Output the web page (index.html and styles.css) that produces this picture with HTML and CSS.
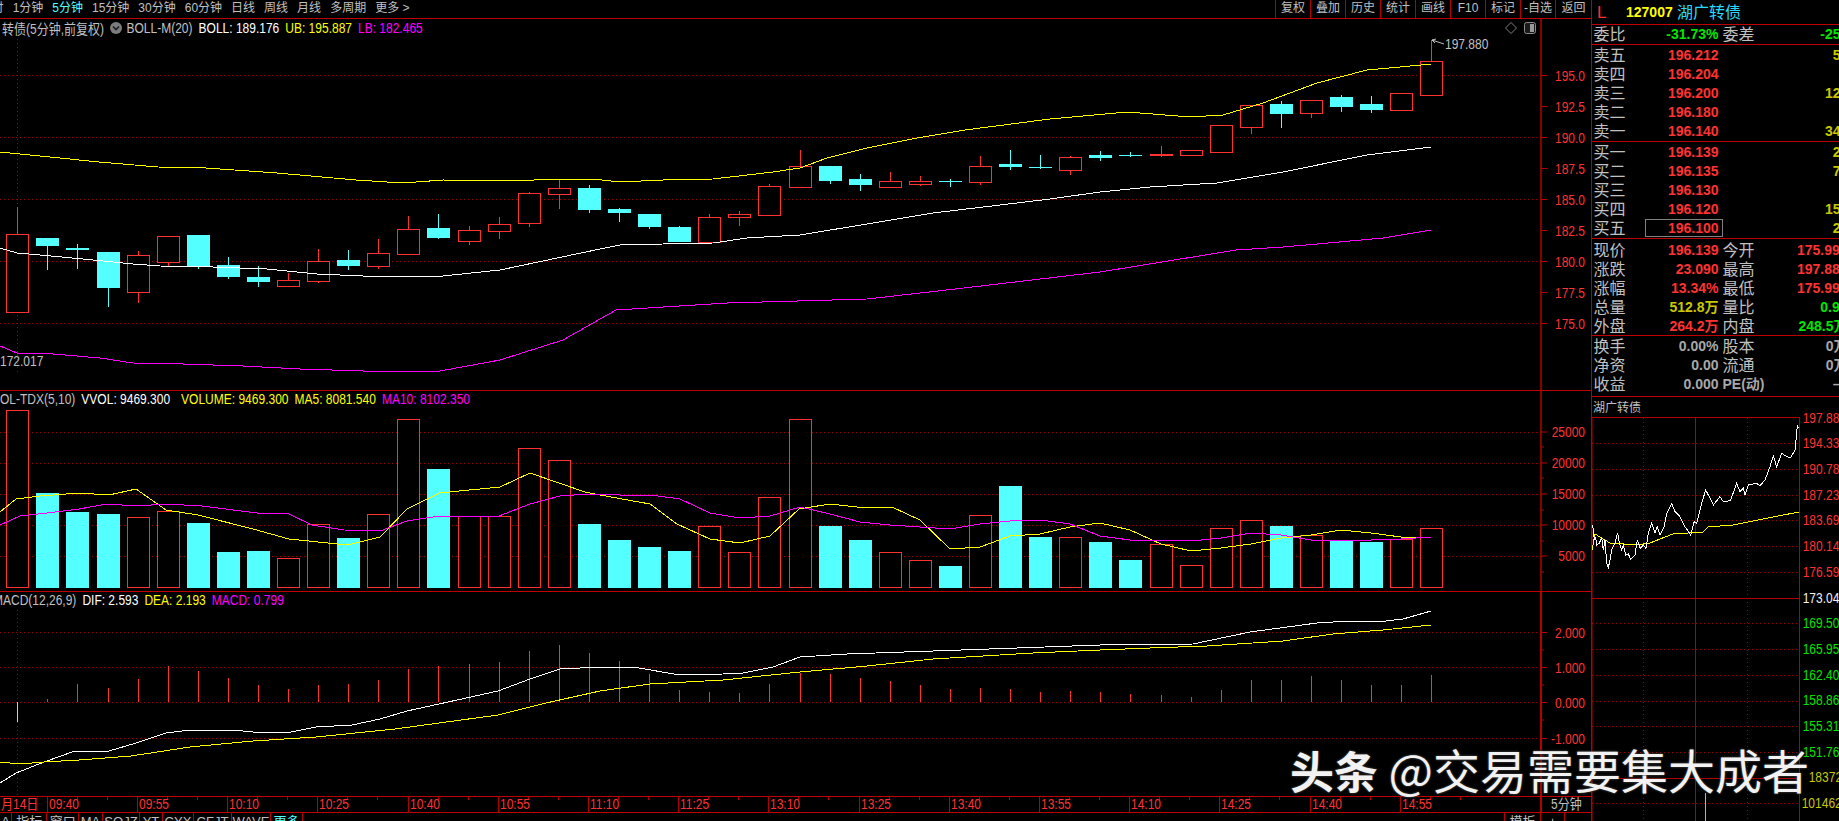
FILE: index.html
```html
<!DOCTYPE html>
<html lang="zh-CN">
<head>
<meta charset="utf-8">
<title>湖广转债 5分钟</title>
<link rel="stylesheet" href="styles.css">
</head>
<body>
<div class="app">
  <div class="left">
    <header class="topbar">
      <nav class="periods">
        <span class="cut">分时</span><span>1分钟</span><span class="on">5分钟</span><span>15分钟</span><span>30分钟</span><span>60分钟</span><span>日线</span><span>周线</span><span>月线</span><span>多周期</span><span>更多 &gt;</span>
      </nav>
      <nav class="tools">
        <span>复权</span><span>叠加</span><span>历史</span><span>统计</span><span>画线</span><span>F10</span><span>标记</span><span>-自选</span><span>返回</span>
      </nav>
    </header>

    <section class="pane pane-main">
      <svg id="main" class="chart" viewBox="0 19 1591 371"></svg>
      <div class="legend">
        <span class="gray">转债(5分钟,前复权)</span>
        <svg class="drop" viewBox="0 0 12 12"><circle cx="6" cy="6" r="6" fill="#7c7c7c"/><path d="M3 4.5 6 7.5 9 4.5" fill="none" stroke="#1c1c1c" stroke-width="1.6"/></svg>
        <span class="gray">BOLL-M(20)</span>
        <span class="white">BOLL: 189.176</span>
        <span class="yellow">UB: 195.887</span>
        <span class="pink">LB: 182.465</span>
      </div>
      <div class="pane-icons">
        <svg viewBox="0 0 12 12" class="ico"><path d="M6 .5 11.5 6 6 11.5 .5 6Z" fill="none" stroke="#808080"/></svg>
        <svg viewBox="0 0 12 12" class="ico"><rect x=".5" y=".5" width="11" height="11" rx="2" fill="#1a1a1a" stroke="#8c8c8c"/><rect x="6" y="2" width="4" height="8" fill="#9a9a9a"/></svg>
      </div>
    </section>

    <section class="pane pane-vol">
      <svg id="vol" class="chart" viewBox="0 391 1591 200"></svg>
      <div class="legend">
        <span class="gray flush">OL-TDX(5,10)</span>
        <span class="white">VVOL: 9469.300</span>
        <span class="yellow wide">VOLUME: 9469.300</span>
        <span class="yellow">MA5: 8081.540</span>
        <span class="pink">MA10: 8102.350</span>
      </div>
    </section>

    <section class="pane pane-macd">
      <svg id="macd" class="chart" viewBox="0 592 1591 204"></svg>
      <div class="legend">
        <span class="gray clip">MACD(12,26,9)</span>
        <span class="white">DIF: 2.593</span>
        <span class="yellow">DEA: 2.193</span>
        <span class="pink">MACD: 0.799</span>
      </div>
    </section>

    <svg id="time" class="timeaxis" viewBox="0 797 1591 15"></svg>

    <footer class="tabs">
      <span>A</span><span>指标B</span><span>窗口</span><span>MA</span><span>SQJZ</span><span>YT</span><span>CYX</span><span>CFJT</span><span>WAVE</span><span class="on">更多</span><i></i><span>模板</span><span>+</span><b>−</b>
    </footer>
  </div>

  <aside class="right">
    <div class="head"><span class="h-l">L</span><span class="h-code">127007</span><span class="h-name">湖广转债</span></div>

    <div class="block b-ratio">
      <div class="row"><span>委比</span><b class="g">-31.73%</b><i></i><span>委差</span><b class="g q">-25</b></div>
    </div>

    <div class="block b-book">
      <div class="row"><span>卖五</span><b class="r">196.212</b><i></i><span></span><b class="y q">5</b></div>
      <div class="row"><span>卖四</span><b class="r">196.204</b><i></i><span></span><b class="y q"></b></div>
      <div class="row"><span>卖三</span><b class="r">196.200</b><i></i><span></span><b class="y q">12</b></div>
      <div class="row"><span>卖二</span><b class="r">196.180</b><i></i><span></span><b class="y q"></b></div>
      <div class="row"><span>卖一</span><b class="r">196.140</b><i></i><span></span><b class="y q">34</b></div>
    </div>

    <div class="block b-book">
      <div class="row"><span>买一</span><b class="r">196.139</b><i></i><span></span><b class="y q">2</b></div>
      <div class="row"><span>买二</span><b class="r">196.135</b><i></i><span></span><b class="y q">7</b></div>
      <div class="row"><span>买三</span><b class="r">196.130</b><i></i><span></span><b class="y q"></b></div>
      <div class="row"><span>买四</span><b class="r">196.120</b><i></i><span></span><b class="y q">15</b></div>
      <div class="row"><span>买五</span><b class="r boxed">196.100</b><i></i><span></span><b class="y q">2</b></div>
    </div>

    <div class="block b-stats">
      <div class="row"><span>现价</span><b class="r">196.139</b><i></i><span>今开</span><b class="r">175.990</b></div>
      <div class="row"><span>涨跌</span><b class="r">23.090</b><i></i><span>最高</span><b class="r">197.880</b></div>
      <div class="row"><span>涨幅</span><b class="r">13.34%</b><i></i><span>最低</span><b class="r">175.990</b></div>
      <div class="row"><span>总量</span><b class="y">512.8万</b><i></i><span>量比</span><b class="g">0.91</b></div>
      <div class="row"><span>外盘</span><b class="r">264.2万</b><i></i><span>内盘</span><b class="g">248.5万</b></div>
    </div>

    <div class="block b-extra">
      <div class="row"><span>换手</span><b class="m">0.00%</b><i></i><span>股本</span><b class="m">0万</b></div>
      <div class="row"><span>净资</span><b class="m">0.00</b><i></i><span>流通</span><b class="m">0万</b></div>
      <div class="row"><span>收益</span><b class="m">0.000</b><i></i><b class="m pe">PE(动)</b><b class="m q">–</b></div>
    </div>

    <div class="mini-title">湖广转债</div>
    <svg id="mini" class="mini" viewBox="1592 417 247 404"></svg>
  </aside>
</div>

<div class="mark"><b>头条</b> @交易需要集大成者</div>

<script src="chart.js"></script>
</body>
</html>
```

FILE: styles.css
```css
* { box-sizing: border-box; }
html, body { margin: 0; padding: 0; height: 100%; background: #000; overflow: hidden; }
body { font-family: "Liberation Sans", "Noto Sans CJK SC", sans-serif; color: #c0c0c0; }

.app { display: flex; width: 1839px; height: 821px; overflow: hidden; }
.left { width: 1592px; flex: none; display: flex; flex-direction: column; border-right: 1px solid #b40000; }
.right { width: 247px; flex: none; overflow: hidden; display: flex; flex-direction: column; }

/* top bar */
.topbar { height: 19px; flex: none; display: flex; justify-content: space-between; border-bottom: 1px solid #c00000; font-size: 12px; line-height: 17px; }
.periods { display: flex; gap: 9px; white-space: nowrap; }
.periods .cut { margin-left: -20.4px; }
.periods .on { color: #54ffff; }
.tools { display: flex; }
.tools span { width: 35px; text-align: center; border-left: 1px solid #b40000; }
.tools span:last-child { width: 36px; }

/* panes */
.pane { position: relative; flex: none; border-bottom: 1px solid #c00000; }
.pane-main { height: 372px; }
.pane-vol { height: 201px; }
.pane-macd { height: 205px; }
.chart, .timeaxis { display: block; width: 1591px; }
.pane-main .chart { height: 371px; }
.pane-vol .chart { height: 200px; }
.pane-macd .chart { height: 204px; }
.timeaxis { height: 15px; flex: none; }

.legend { position: absolute; left: 2px; top: 0; display: flex; gap: 6px; align-items: center; height: 17px; font-size: 12px; white-space: nowrap; }
.legend span { display: block; transform: scaleY(1.15); }
.pane-vol .legend, .pane-macd .legend { left: 0; top: -1px; }
.legend .clip { margin-left: -7px; }
.legend .wide { margin-left: 5px; }
.drop { width: 12px; height: 12px; flex: none; margin: 0 -1.5px 0 0; }
.gray { color: #c0c0c0; }
.white { color: #fff; }
.yellow { color: #ffff00; }
.pink { color: #ff00ff; }

.pane-icons { position: absolute; top: 3px; left: 1505px; display: flex; gap: 7px; }
.ico { width: 12px; height: 12px; display: block; }

/* bottom tabs */
.tabs { height: 9px; flex: none; overflow: hidden; display: grid; border-top: 1px solid #c00000; font-size: 13px; line-height: 18px;
  grid-template-columns: 12px 35.4px 31.6px 24px 37px 23px 31px 38px 39px 32px 1fr 36px 24px 26px; }
.tabs span, .tabs b { text-align: center; font-weight: 400; border-right: 1px solid #b40000; }
.tabs .on { color: #54ffff; }
.tabs b { border-right: 0; }
.tabs i { border-right: 1px solid #b40000; }

/* quote panel */
.head { height: 25px; flex: none; border-bottom: 1px solid #c00000; padding-left: 5px; display: grid; grid-template-columns: 29px 51px auto; align-items: center; line-height: 23px; }
.h-l { color: #ff3232; font-size: 17px; }
.h-code { color: #ffff00; font-size: 14px; font-weight: 700; }
.h-name { color: #26d9ff; font-size: 16px; }

.block { flex: none; border-bottom: 1px solid #c00000; padding-left: 1.5px; }
.b-ratio { height: 20px; }
.b-book { height: 97px; padding-top: 1px; }
.b-stats { height: 97px; padding-top: 1.5px; }
.b-extra { height: 61px; padding-top: 1px; }

.row { display: grid; grid-template-columns: 32px 93px 4px 32px 93px; height: 19px; line-height: 19px; white-space: nowrap; }
.row span { font-size: 16px; color: #c0c0c0; }
.row b { font-size: 14px; text-align: right; font-weight: 700; }
.row .r { color: #ff3232; }
.row .g { color: #00e600; }
.row .y { color: #c8c800; }
.row .m { color: #a8a8a8; }
.row .q { padding-right: 7px; }
.row .pe { text-align: left; white-space: nowrap; }
.row .boxed { justify-self: end; width: 78px; height: 18px; line-height: 16px; margin-right: -4px; padding-right: 3px; border: 1px solid #808080; }

.mini-title { height: 20px; flex: none; font-size: 12px; line-height: 23px; padding-left: 1px; color: #c0c0c0; }
.mini { display: block; width: 247px; height: 404px; flex: none; overflow: visible; }

/* svg text */
.ax { font-family: "Liberation Sans", sans-serif; font-size: 12px; fill: #ff3232; }
.ax-gray { font-family: "Liberation Sans", sans-serif; font-size: 12px; fill: #c0c0c0; }
.cj { font-family: "Liberation Sans", "Noto Sans CJK SC", sans-serif; font-size: 12px; }
.red { fill: #ff3232; }
.grayfill { fill: #c0c0c0; }
.mn { font-family: "Liberation Sans", sans-serif; font-size: 12px; }
.mn-r { fill: #ff3232; }
.mn-w { fill: #f0f0f0; }
.mn-g { fill: #00e600; }
.mn-y { fill: #c8c800; }

/* watermark */
.mark { position: absolute; left: 1290px; top: 741px; font-size: 47px; line-height: 56px; color: #f2f2f2; white-space: nowrap; font-family: "Noto Sans CJK SC", sans-serif; text-shadow: 0 0 2px #3a3a3a, 0 0 3px #3a3a3a; }
.mark b { font-weight: 700; font-size: 44px; }
```

FILE: chart.js
```js
var LINE = '#b40000', GRID = '#a00000', RED = '#ff3232', CY = '#54ffff';
var X = function (i) { return Math.round(17.3 + i * 30.085); };

function hgrid(ys, solid) {
  return ys.map(function (y) {
    y = Math.round(y) + 0.5;
    return '<line x1="0" x2="1541" y1="' + y + '" y2="' + y + '" stroke="' + GRID + '" stroke-dasharray="1 3"/>';
  }).join('');
}
function vline(x, a, b, c, w) {
  return '<line x1="' + x + '" x2="' + x + '" y1="' + a + '" y2="' + b + '" stroke="' + c + '" stroke-width="' + (w || 1) + '"/>';
}
function poly(pts, c) {
  return '<polyline fill="none" stroke="' + c + '" shape-rendering="crispEdges" points="' +
    pts.map(function (p) { return p[0] + ',' + p[1]; }).join(' ') + '"/>';
}
function tx(x, y, s, cls, anchor) {
  return '<text class="' + cls + '" text-anchor="' + (anchor || 'start') + '" transform="translate(' + x + ',' + y + ') scale(1,1.15)">' + s + '</text>';
}
function axis(labels, minor, top, bottom, w) {
  var out = vline(1541, top, bottom, LINE, w);
  labels.forEach(function (l) {
    out += '<line x1="1541" x2="1547" y1="' + l[1] + '" y2="' + l[1] + '" stroke="' + LINE + '"/>';
    out += tx(1585, l[1] + 5, l[0], 'ax', 'end');
  });
  minor.forEach(function (y) {
    out += '<line x1="1541" x2="1544" y1="' + y + '" y2="' + y + '" stroke="' + LINE + '"/>';
  });
  return out;
}

/* candles: top, bottom, wick top, wick bottom, r|c */
var K = [
[234,312,207,312,'r'],[238,246,238,270,'c'],[248,250,244,269,'c'],[252,288,252,307,'c'],[255,292,251,303,'r'],
[236,262,236,266,'r'],[235,266,235,269,'c'],[265,277,257,279,'c'],[277,282,266,287,'c'],[280,286,273,286,'r'],
[261,281,249,283,'r'],[260,266,250,270,'c'],[253,266,239,269,'r'],[229,254,216,254,'r'],[228,238,214,239,'c'],
[230,241,226,245,'r'],[224,231,217,239,'r'],[193,223,192,227,'r'],[188,194,179,209,'r'],[188,210,185,213,'c'],
[209,213,208,222,'c'],[214,227,214,229,'c'],[227,242,226,242,'c'],[217,242,214,242,'r'],[214,217,211,226,'r'],
[186,215,184,215,'r'],[166,187,150,187,'r'],[166,181,166,184,'c'],[179,185,174,191,'c'],[181,187,172,187,'r'],
[181,184,176,186,'r'],[181,182,179,187,'c'],[166,182,156,185,'r'],[164,167,150,170,'c'],[167,168,155,169,'c'],
[157,170,156,175,'r'],[155,158,151,161,'c'],[155,156,152,157,'c'],[154,156,146,157,'f'],[150,155,150,156,'r'],
[125,152,125,152,'r'],[105,127,105,134,'r'],[104,114,101,128,'c'],[100,113,100,118,'r'],[97,107,95,112,'c'],
[104,110,96,113,'c'],[93,110,93,110,'r'],[61,95,40,95,'r']
];

var mainYellow = [[0,152],[40,156],[99,162],[158,167],[206,168],[277,173],[356,180],[403,183],[443,180],[514,181],[554,179],[593,179],[620,182],[663,180],[713,179],[773,172],[800,168],[827,158],[867,148],[917,138],[965,130],[1050,119],[1083,116],[1127,112],[1153,114],[1190,117],[1223,115],[1263,103],[1317,83],[1367,70],[1400,67],[1431,64]];
var mainWhite = [[0,248],[17,253],[40,255],[83,259],[133,264],[160,266],[213,267],[267,269],[317,274],[363,276],[443,276],[500,270],[600,249],[620,245],[663,244],[713,243],[747,238],[800,235],[867,224],[933,213],[1000,205],[1050,199],[1100,192],[1150,187],[1217,183],[1283,172],[1367,155],[1431,147]];
var mainPink = [[0,346],[17,353],[53,354],[100,358],[133,363],[183,364],[243,366],[300,369],[363,371],[440,371],[500,360],[563,340],[616,310],[727,303],[867,299],[938,291],[1100,272],[1236,250],[1283,247],[1317,244],[1383,238],[1431,230]];

(function () {
  var s = hgrid([75.3, 137.3, 199.3, 261.3, 323.3]);
  s += '<line x1="17.5" x2="17.5" y1="39" y2="375" stroke="' + GRID + '" stroke-dasharray="1 3"/>';
  K.forEach(function (k, i) {
    var x = X(i), c = k[4] === 'c' ? CY : RED;
    s += vline(x + 0.5, k[2], k[3], c);
    if (k[4] === 'r') {
      s += '<rect x="' + (x - 11 + 0.5) + '" y="' + (k[0] + 0.5) + '" width="22" height="' + (k[1] - k[0]) + '" fill="#000" stroke="' + RED + '"/>';
    } else {
      var h = Math.max(k[1] - k[0], 1);
      s += '<rect x="' + (x - 11) + '" y="' + k[0] + '" width="23" height="' + h + '" fill="' + c + '"/>';
    }
  });
  s += poly(mainYellow, '#ffff00') + poly(mainWhite, '#ffffff') + poly(mainPink, '#ff00ff');
  s += tx(0, 366, '172.017', 'ax-gray');
  s += tx(1445, 49, '197.880', 'ax-gray');
  s += '<path d="M1432 40 1444 44M1432 40l4-1M1432 40l3 3" stroke="#c0c0c0" fill="none"/>';
  var labels = [], minor = [];
  ['195.0','192.5','190.0','187.5','185.0','182.5','180.0','177.5','175.0'].forEach(function (t, i) {
    labels.push([t, Math.round(75.3 + i * 31) + 0.5]);
  });
  s += axis(labels, minor, 19, 390, 1.5);
  document.getElementById('main').innerHTML = s;
})();

/* volume */
var V = [
[410,'r'],[493,'c'],[512,'c'],[514,'c'],[517,'r'],[511,'r'],[523,'c'],[552,'c'],[551,'c'],[558,'r'],
[524,'r'],[538,'c'],[514,'r'],[419,'r'],[469,'c'],[516,'r'],[516,'r'],[448,'r'],[460,'r'],[524,'c'],
[540,'c'],[547,'c'],[551,'c'],[526,'r'],[552,'r'],[497,'r'],[419,'r'],[526,'c'],[540,'c'],[552,'r'],
[560,'r'],[566,'c'],[515,'r'],[486,'c'],[537,'c'],[537,'r'],[542,'c'],[560,'c'],[544,'r'],[565,'r'],
[528,'r'],[520,'r'],[526,'c'],[535,'r'],[541,'c'],[542,'c'],[539,'r'],[528,'r']
];
var volYellow = [[0,512],[16,499],[40,496],[79,493],[109,495],[136,489],[166,510],[198,515],[253,529],[289,539],[328,543],[348,545],[380,537],[407,509],[439,493],[500,487],[530,473],[585,492],[600,495],[650,504],[677,524],[710,539],[740,543],[770,536],[799,509],[830,504],[857,507],[892,507],[920,520],[950,549],[980,547],[1010,536],[1040,534],[1070,527],[1100,523],[1130,530],[1161,544],[1191,551],[1221,548],[1251,544],[1281,538],[1311,535],[1341,530],[1371,533],[1401,537],[1426,537]];
var volPink = [[0,525],[20,516],[47,513],[79,509],[107,504],[136,506],[166,504],[202,506],[257,513],[289,514],[312,525],[344,530],[380,531],[407,521],[439,516],[499,516],[530,504],[560,496],[589,494],[620,495],[650,495],[680,499],[710,513],[740,518],[770,516],[800,507],[830,514],[860,522],[890,525],[920,527],[950,529],[980,524],[1010,521],[1040,520],[1070,524],[1100,536],[1130,540],[1161,540],[1191,541],[1221,538],[1251,533],[1281,535],[1311,540],[1341,540],[1371,540],[1401,539],[1431,537]];

(function () {
  var s = hgrid([431.7, 462.7, 494.3, 525.3, 556.3]);
  V.forEach(function (v, i) {
    var x = X(i);
    if (v[1] === 'r') {
      s += '<rect x="' + (x - 11 + 0.5) + '" y="' + (v[0] + 0.5) + '" width="22" height="' + (587 - v[0]) + '" fill="#000" stroke="' + RED + '"/>';
    } else {
      s += '<rect x="' + (x - 11) + '" y="' + v[0] + '" width="23" height="' + (588 - v[0]) + '" fill="' + CY + '"/>';
    }
  });
  s += poly(volYellow, '#ffff00') + poly(volPink, '#ff00ff');
  var labels = [['25000',432],['20000',463],['15000',494],['10000',525],['5000',556]];
  s += axis(labels, [447, 478, 510, 541, 572], 391, 591, 1.5);
  document.getElementById('vol').innerHTML = s;
})();

/* MACD */
var M = [722,699,684,688,679,666,671,678,685,689,685,684,680,669,666,664,662,651,645,653,661,674,690,692,693,684,673,674,678,681,685,689,688,689,692,691,692,694,695,697,690,680,680,676,680,685,685,675];
var macdWhite = [[0,783],[16,773],[44,762],[75,751],[109,751],[136,743],[166,733],[190,730],[233,730],[253,732],[291,732],[316,727],[352,725],[380,719],[407,711],[439,704],[498,691],[530,679],[560,669],[600,667],[633,667],[680,675],[723,674],[743,673],[773,667],[800,657],[847,654],[933,651],[1017,648],[1100,645],[1193,644],[1250,632],[1317,623],[1350,621],[1377,622],[1403,619],[1431,611]];
var macdYellow = [[0,762],[20,764],[44,762],[79,760],[131,756],[190,747],[253,741],[316,737],[395,729],[498,715],[546,703],[600,691],[650,684],[723,680],[800,672],[867,666],[933,659],[1033,653],[1100,650],[1150,648],[1207,646],[1283,641],[1333,634],[1383,630],[1431,625]];

(function () {
  var s = hgrid([632.3, 667.3, 702.3, 738.3]);
  s += '<line x1="17.5" x2="17.5" y1="610" y2="796" stroke="' + GRID + '" stroke-dasharray="1 3"/>';
  M.forEach(function (t, i) {
    var x = X(i) + 0.5, c = i === 0 ? CY : RED;
    s += vline(x, i === 0 ? 702 : t, i === 0 ? t : 702, c);
  });
  s += poly(macdWhite, '#ffffff') + poly(macdYellow, '#ffff00');
  var labels = [['2.000',632.5],['1.000',667.5],['0.000',702.5],['-1.000',738.5]];
  s += axis(labels, [650, 685, 720, 756, 773], 592, 796, 2);
  document.getElementById('macd').innerHTML = s;
})();

/* time axis */
(function () {
  var s = '', t = ['09:40','09:55','10:10','10:25','10:40','10:55','11:10','11:25','13:10','13:25','13:40','13:55','14:10','14:25','14:40','14:55'];
  s += tx(1, 809, '月14日', 'cj red');
  t.forEach(function (l, k) {
    var x = Math.round(46.7 + 90.2 * k) + 0.5;
    s += vline(x, 797, 812, LINE);
    s += vline(x + 30, 797, 800, LINE) + vline(x + 60, 797, 800, LINE);
    s += tx(x + 1.5, 809, l, 'ax');
  });
  s += vline(1541, 797, 812, LINE, 2);
  s += tx(1551, 809, '5分钟', 'cj grayfill');
  document.getElementById('time').innerHTML = s;
})();

/* mini chart */
(function () {
  var z3 = function (p) { return [1560 + p[0] / 3, 240 + p[1] / 3]; };
  var white = [[97,855],[100,870],[103,900],[107,890],[110,915],[118,910],[125,892],[130,930],[135,900],[140,970],[145,983],[150,960],[155,930],[165,910],[173,878],[178,910],[185,930],[190,915],[197,945],[205,942],[212,958],[225,945],[232,900],[240,925],[250,915],[258,925],[265,880],[275,850],[285,880],[292,860],[300,885],[312,860],[320,820],[335,790],[345,815],[360,830],[375,860],[392,885],[402,845],[410,850],[425,790],[437,750],[445,765],[460,795],[480,770],[490,785],[500,785],[512,780],[530,730],[540,755],[550,745],[555,765],[565,735],[590,730],[600,737],[615,720],[630,680],[640,648],[650,680],[665,640],[680,650],[692,653],[705,630],[712,558],[716,565]].map(z3);
  var yellow = [[1592,550],[1595,534],[1610,543],[1637,545],[1650,543],[1660,539],[1673,534],[1703,532],[1708,527],[1733,525],[1773,517],[1799,512]];
  var s = '';
  var dots = [443.3,469.3,495.3,520.3,546,572.3,623.3,649.3,675.3,700.7,726.3,752.3,802.7];
  dots.forEach(function (y) {
    y = Math.round(y) + 0.5;
    s += '<line x1="1592" x2="1799" y1="' + y + '" y2="' + y + '" stroke="' + GRID + '" stroke-dasharray="1 3"/>';
  });
  [1643.5, 1747.5].forEach(function (x) {
    s += '<line x1="' + x + '" x2="' + x + '" y1="418" y2="821" stroke="' + GRID + '" stroke-dasharray="1 3"/>';
  });
  s += vline(1695.5, 418, 821, LINE) + vline(1799.5, 417, 821, LINE) + vline(1592, 417, 821, LINE, 1);
  [417.5, 598.5, 778.5].forEach(function (y) {
    s += '<line x1="1592" x2="1799" y1="' + y + '" y2="' + y + '" stroke="' + LINE + '"/>';
  });
  s += vline(1705.5, 793, 821, '#c8c800');
  s += poly(yellow, '#ffff00') + poly(white, '#ffffff');
  var rows = [['197.88',418,'r'],['194.33',443,'r'],['190.78',469,'r'],['187.23',495,'r'],['183.69',520,'r'],['180.14',546,'r'],['176.59',571.5,'r'],['173.04',598,'w'],['169.50',623,'g'],['165.95',649,'g'],['162.40',675,'g'],['158.86',700,'g'],['155.31',726,'g'],['151.76',751.5,'g']];
  rows.forEach(function (r) {
    s += tx(1802.7, r[1] + 5, r[0], 'mn mn-' + r[2]);
  });
  s += tx(1808.7, 782, '183725', 'mn mn-y');
  s += tx(1801.7, 808, '101462', 'mn mn-y');
  document.getElementById('mini').innerHTML = s;
})();
```
